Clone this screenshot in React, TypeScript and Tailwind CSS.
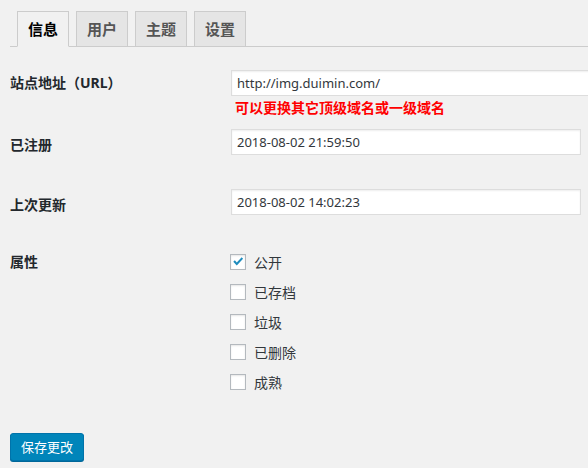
import { useState } from 'react'

const tabs = ['信息', '用户', '主题', '设置']

const attrs = [
  { label: '公开', checked: true },
  { label: '已存档', checked: false },
  { label: '垃圾', checked: false },
  { label: '已删除', checked: false },
  { label: '成熟', checked: false },
]

const font = 'font-["Noto_Sans","Noto_Sans_CJK_SC",sans-serif]'

function CheckBox({ checked }: { checked: boolean }) {
  return (
    <span className="flex h-[16px] w-[16px] shrink-0 items-center justify-center border border-[#b4b9be] bg-white shadow-[inset_0_1px_2px_rgba(0,0,0,0.1)]">
      {checked && (
        <svg viewBox="0 0 16 16" className="h-[16px] w-[16px]">
          <path d="M2.6 7.6 L4.4 6 L6.6 8.6 L12.2 2.6 L13.8 4.2 L6.6 12 Z" fill="#1e8cbe" />
        </svg>
      )}
    </span>
  )
}

export default function App() {
  const [active, setActive] = useState(0)
  const [flags, setFlags] = useState(attrs.map(a => a.checked))

  return (
    <div className={`min-h-screen w-full overflow-hidden bg-[#f1f1f1] pl-[10px] ${font}`}>
      {/* tabs */}
      <div className="mt-[11px] flex gap-[7px] border-b border-[#ccc] pl-[7px]">
        {tabs.map((t, i) => (
          <button
            key={t}
            onClick={() => setActive(i)}
            className={
              i === active
                ? '-mb-px h-[36px] border border-[#ccc] border-b-[#f1f1f1] bg-[#f1f1f1] px-[10px] text-[15px] font-bold leading-[34px] text-black'
                : '-mb-px h-[36px] border border-[#ccc] bg-[#e5e5e5] px-[10px] text-[15px] font-bold leading-[34px] text-[#555]'
            }
          >
            {t}
          </button>
        ))}
      </div>

      {/* site url */}
      <div className="mt-[23px] flex">
        <div className="w-[221px] shrink-0 pt-[3px] text-[14px] font-bold leading-[20px] text-[#23282d]">站点地址（URL）</div>
        <div>
          <input
            readOnly
            value="http://img.duimin.com/"
            className="h-[26px] w-[400px] border border-[#ddd] bg-white px-[5px] text-[13px] text-[#32373c] shadow-[inset_0_1px_2px_rgba(0,0,0,0.07)] outline-none"
          />
          <p className="mt-[2px] pl-[4px] text-[14px] font-bold leading-[20px] text-[#ff0000]">可以更换其它顶级域名或一级域名</p>
        </div>
      </div>

      {/* registered */}
      <div className="mt-[11px] flex">
        <div className="w-[221px] shrink-0 pt-[6px] text-[14px] font-bold leading-[20px] text-[#23282d]">已注册</div>
        <input
          readOnly
          value="2018-08-02 21:59:50"
          className="h-[26px] w-[350px] border border-[#ddd] bg-white px-[5px] text-[13px] text-[#32373c] shadow-[inset_0_1px_2px_rgba(0,0,0,0.07)] outline-none"
        />
      </div>

      {/* last updated */}
      <div className="mt-[34px] flex">
        <div className="w-[221px] shrink-0 pt-[6px] text-[14px] font-bold leading-[20px] text-[#23282d]">上次更新</div>
        <input
          readOnly
          value="2018-08-02 14:02:23"
          className="h-[26px] w-[350px] border border-[#ddd] bg-white px-[5px] text-[13px] text-[#32373c] shadow-[inset_0_1px_2px_rgba(0,0,0,0.07)] outline-none"
        />
      </div>

      {/* attributes */}
      <div className="mt-[32px] flex">
        <div className="w-[220px] shrink-0 pt-[5px] text-[14px] font-bold leading-[20px] text-[#23282d]">属性</div>
        <div>
          {attrs.map((a, i) => (
            <label
              key={a.label}
              className="flex h-[30px] cursor-pointer items-center gap-[8px] text-[14px] text-[#32373c]"
              onClick={() => setFlags(f => f.map((v, j) => (j === i ? !v : v)))}
            >
              <CheckBox checked={flags[i]} />
              <span>{a.label}</span>
            </label>
          ))}
        </div>
      </div>

      <button className="mt-[36px] h-[28px] rounded-[3px] border border-[#0073aa] bg-[#0085ba] px-[10px] text-[13px] leading-[26px] text-white shadow-[0_1px_0_#006799]">
        保存更改
      </button>
    </div>
  )
}
